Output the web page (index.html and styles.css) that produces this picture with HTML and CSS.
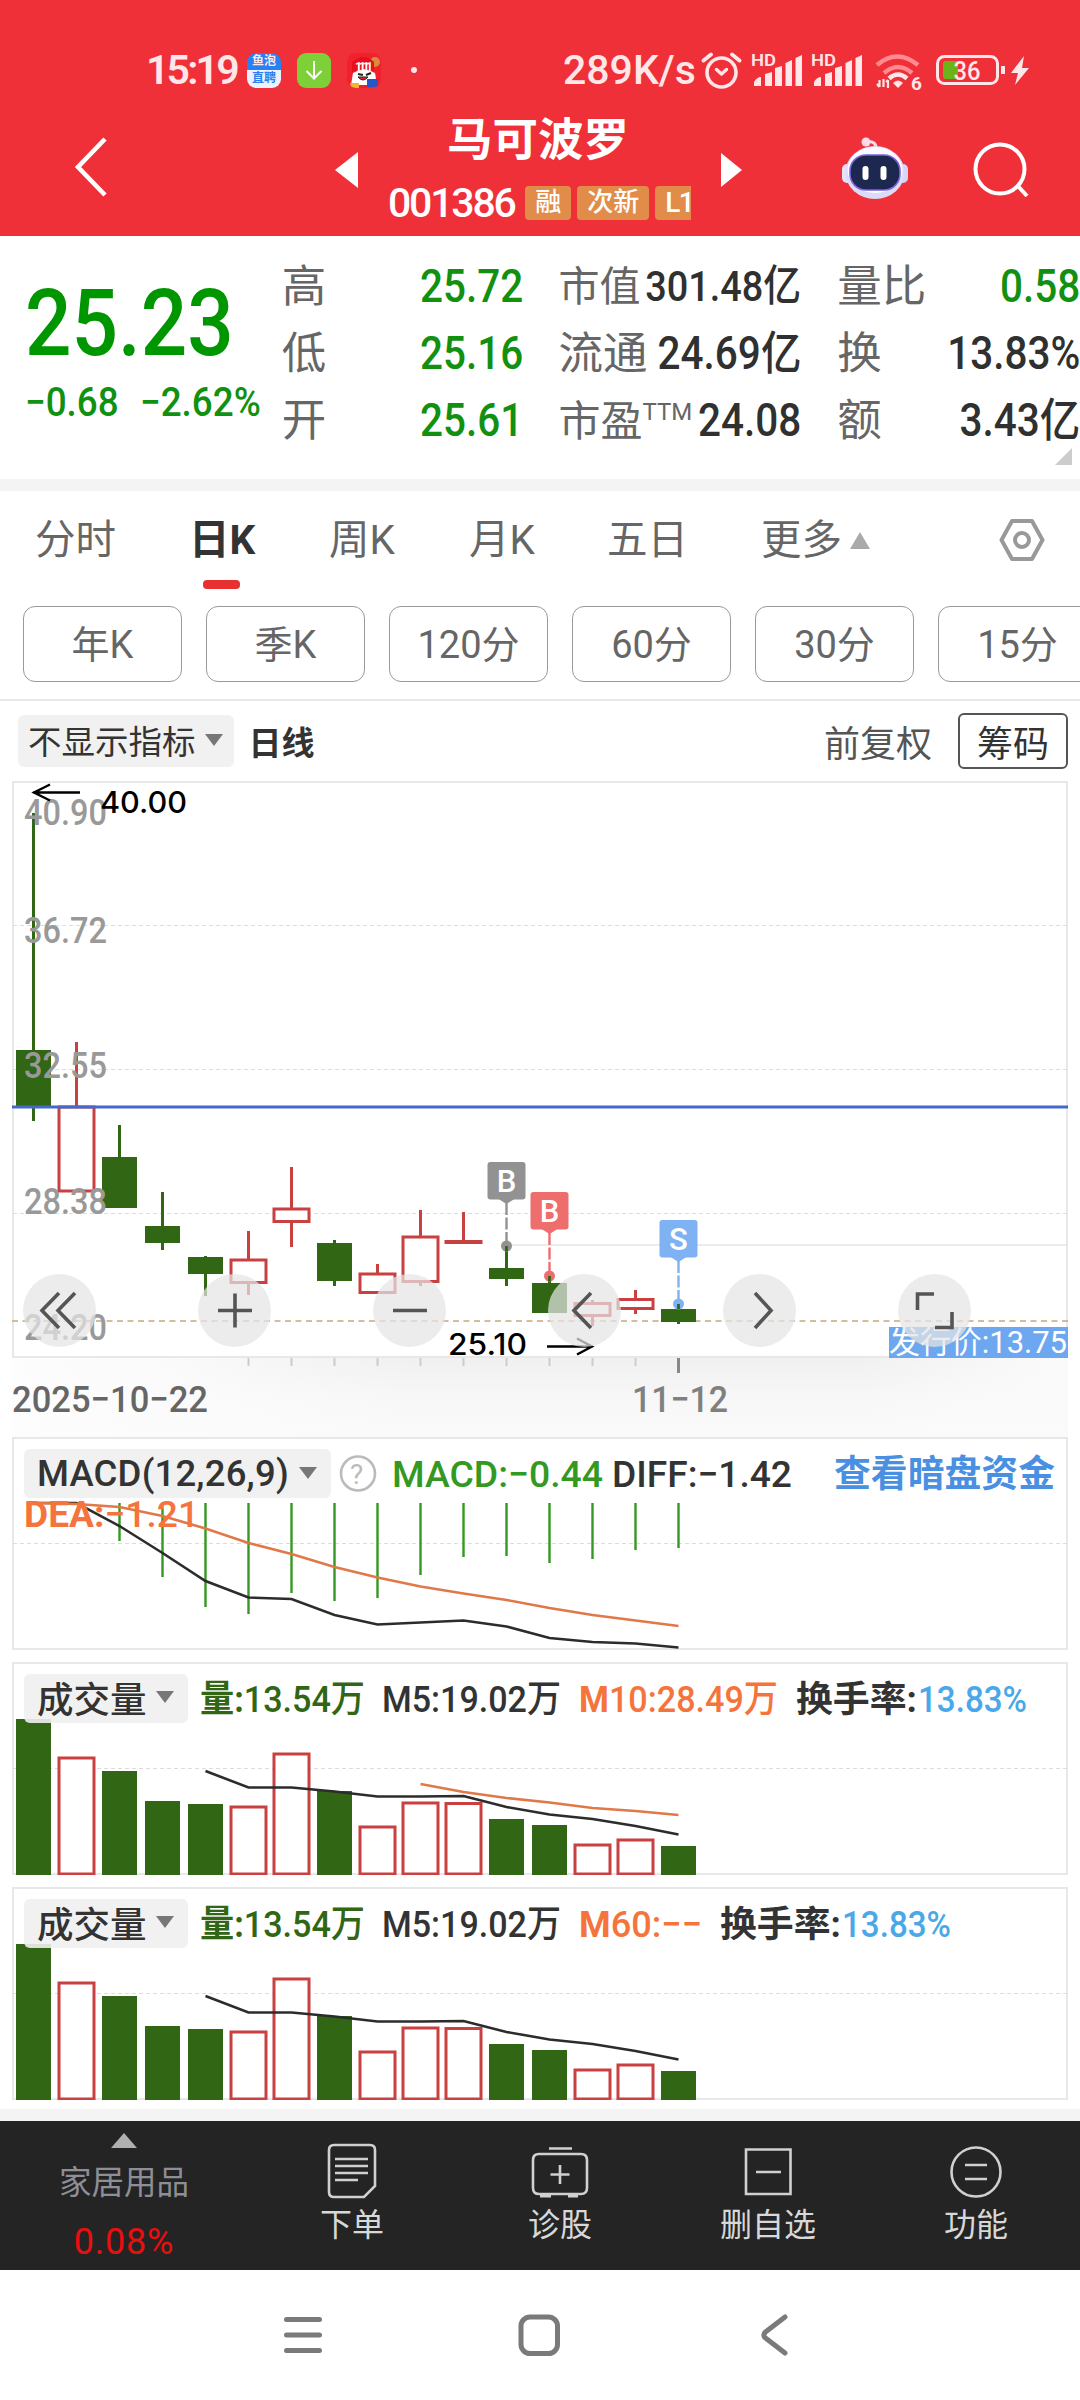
FILE: index.html
```html
<!DOCTYPE html>
<html lang="zh-CN">
<head>
  <meta charset="UTF-8">
  <meta name="viewport" content="width=device-width, initial-scale=1.0">
  <title>马可波罗 001386</title>
  <link rel="stylesheet" href="styles.css">
</head>
<body>
  <header class="Header">
    <div class="StatusBar">
      <span class="StatusBar-Time">15:19</span>
      <span class="AppIcon AppIcon-Fish"><b>鱼泡</b><b>直聘</b></span>
      <span class="AppIcon AppIcon-Down">
        <svg width="34" height="35" viewBox="0 0 34 35"><path d="M17 8v17M9.500 18l7.500 7.500 7.500-7.500" fill="none" stroke="#fff" stroke-width="2"/></svg>
      </span>
      <span class="AppIcon">
        <svg width="34" height="35" viewBox="0 0 34 35">
          <rect width="34" height="35" rx="8" fill="#f0202c"/>
          <circle cx="28" cy="9" r="5" fill="#d98a3c"/>
          <path d="M4 32l2-12q11-7 22 0l2 12z" fill="#fff"/>
          <path d="M5 19V9q12-10 22 0v9q-11-5-22 1z" fill="#e8101c"/>
          <text x="8" y="18" font-size="12" font-weight="700" fill="#fff" textLength="18">11.11</text>
          <path d="M11 21l5 1M19 22l5-2" stroke="#222" stroke-width="2"/>
          <path d="M11 24q5 6 10 0z" fill="#e8202c" stroke="#222"/>
          <rect x="20" y="26" width="11" height="8" fill="#2458c8"/>
          <path d="M3 30h9v5h-8z" fill="#f6b62c"/>
        </svg>
      </span>
      <i class="StatusBar-Dot"></i>
      <span class="StatusBar-Speed">289K/s</span>
      <svg class="StatusBar-Icons" width="330" height="44" viewBox="700 48 330 44" fill="none" stroke="#ffe6e8">
        <circle cx="721.500" cy="72.500" r="14.500" stroke-width="3.600"/>
        <path d="M703.500 60.500l7.500-6M739.500 60.500l-7.500-6" stroke-width="4" stroke-linecap="round"/>
        <path d="M716.500 69.500l5 4.500 5-4.500" stroke-width="3.400" stroke-linecap="round" stroke-linejoin="round"/>
        <g id="signalA" fill="#ffe6e8" stroke="none">
          <text x="751" y="66" font-size="16" font-weight="600" textLength="25" lengthAdjust="spacingAndGlyphs">HD</text>
          <path d="M754 86v-4q3-5 7-5v9zM765 86V74l7-2v14zM775 86V68l7-2v20zM785.500 86V63l6.500-3v26zM795.500 86V58l6.500-3v31z"/>
        </g>
        <use href="#signalA" x="60"/>
        <path d="M877 65q20-17 41 0M884 73q14-12 28 0" stroke="#ff8a8f" stroke-width="4.500"/>
        <path d="M889 78.500q9-8 18 0" stroke-width="4.500"/>
        <path d="M893 83q5-5 10 0l-5 5z" fill="#ffe6e8" stroke="none"/>
        <path d="M879.500 80v7M883.500 79v8M877 84l2.500 3M888 80v8M886 82l2-2" stroke-width="2.200"/>
        <text x="911" y="90" font-size="19" font-weight="700" fill="#ffe6e8" stroke="none">6</text>
        <rect x="937.500" y="56.500" width="60" height="27" rx="7" stroke-width="3"/>
        <path d="M946 61h12v18h-12q-3 0-3-3V64q0-3 3-3z" fill="#6ab41a" stroke="none"/>
        <text x="953.500" y="79.500" font-size="25" font-weight="500" fill="#ffe6e8" stroke="none" textLength="27" lengthAdjust="spacingAndGlyphs">36</text>
        <path d="M1003 66v8" stroke-width="4"/>
        <path d="M1024 56l-13 17h7l-3 12 14-17h-7z" fill="#ffe6e8" stroke="none"/>
      </svg>
    </div>

    <div class="TitleBar">
      <svg class="TitleBar-Back" width="40" height="66" viewBox="0 0 40 66"><path d="M35 5L8 33l27 28" fill="none" stroke="#fff" stroke-width="4.600"/></svg>
      <svg class="TitleBar-Prev" width="23" height="36" viewBox="0 0 23 36"><path d="M23 0v36L0 18z" fill="#fff"/></svg>
      <div class="Stock">
        <div class="Stock-Name">马可波罗</div>
        <div class="Stock-Info">
          <span class="Stock-Code">001386</span>
          <span class="Tag">融</span>
          <span class="Tag">次新</span>
          <span class="Tag Tag-Cut">L1</span>
        </div>
      </div>
      <svg class="TitleBar-Next" width="21" height="34" viewBox="0 0 21 34"><path d="M0 0v34l21-17z" fill="#fff"/></svg>
      <svg class="TitleBar-Robot" width="68" height="64" viewBox="0 0 68 64">
        <circle cx="25" cy="5" r="4.500" fill="#ffd9e6"/>
        <path d="M25 4.500q11-1 10 8" fill="none" stroke="#f7dcea" stroke-width="3"/>
        <rect x="1" y="27" width="10" height="19" rx="5" fill="#e4e2fb"/>
        <rect x="57" y="27" width="10" height="19" rx="5" fill="#d6d4fa"/>
        <ellipse cx="34" cy="35.500" rx="29.500" ry="26.500" fill="#dcdcf8"/>
        <ellipse cx="34" cy="33" rx="27.500" ry="23" fill="#fbfbff"/>
        <rect x="9" y="18" width="50" height="35" rx="16" fill="#1c2850" stroke="#7a62e0" stroke-width="1.600"/>
        <path d="M24.500 32v8M42.500 32v8" stroke="#fff" stroke-width="6" stroke-linecap="round"/>
      </svg>
      <svg class="TitleBar-Search" width="60" height="60" viewBox="0 0 60 60" fill="none" stroke="#fff" stroke-width="4"><circle cx="29" cy="28" r="24.500"/><path d="M46 44l10 11"/></svg>
    </div>
  </header>

  <section class="Quote">
    <div class="Quote-Main">
      <div class="Quote-Price"><span class="Num">25.23</span></div>
      <div class="Quote-Change"><span class="Num">−0.68</span><span class="Num">−2.62%</span></div>
    </div>
    <div class="Quote-Col Quote-Col1">
      <div><span>高</span><b class="Num Green">25.72</b></div>
      <div><span>低</span><b class="Num Green">25.16</b></div>
      <div><span>开</span><b class="Num Green">25.61</b></div>
    </div>
    <div class="Quote-Col Quote-Col2">
      <div><span class="Small">市值</span><b class="Num Small">301.48亿</b></div>
      <div><span>流通</span><b class="Num">24.69亿</b></div>
      <div><span class="Mid">市盈<sup>TTM</sup></span><b class="Num">24.08</b></div>
    </div>
    <div class="Quote-Col Quote-Col3">
      <div><span>量比</span><b class="Num Green">0.58</b></div>
      <div><span>换</span><b class="Num">13.83%</b></div>
      <div><span>额</span><b class="Num">3.43亿</b></div>
    </div>
    <i class="Quote-More"></i>
  </section>

  <nav class="Tabs">
    <span>分时</span>
    <span class="Tabs-Active">日K</span>
    <span>周K</span>
    <span>月K</span>
    <span>五日</span>
    <span>更多<i class="Up"></i></span>
    <svg width="46" height="44" viewBox="0 0 46 44" fill="none" stroke="#999" stroke-width="4" stroke-linejoin="round"><path d="M13 3h20l10.500 19L33 41H13L2.500 22z"/><circle cx="23" cy="22" r="7"/></svg>
  </nav>
  <div class="Periods">
    <button>年K</button><button>季K</button><button>120分</button><button>60分</button><button>30分</button><button>15分</button>
  </div>

  <div class="Toolbar">
    <span class="Select">不显示指标<i class="Down"></i></span>
    <b>日线</b>
    <span class="Toolbar-Adjust">前复权</span>
    <button class="Toolbar-Chips">筹码</button>
  </div>

  <section class="Chart Chart-Main">
    <svg width="1080" height="656" viewBox="0 781 1080 656">
      <defs>
        <linearGradient id="axisDown" x1="0" y1="0" x2="0" y2="1">
          <stop offset="0" stop-color="#f0f0f0"/><stop offset=".5" stop-color="#f7f7f7"/><stop offset="1" stop-color="#fafafa"/>
        </linearGradient>
        <linearGradient id="axisFade" x1="0" y1="0" x2="1" y2="0">
          <stop offset="0" stop-color="#fdfdfd"/><stop offset=".15" stop-color="#fcfcfc" stop-opacity=".8"/><stop offset=".38" stop-color="#fcfcfc" stop-opacity="0"/><stop offset=".8" stop-color="#fcfcfc" stop-opacity="0"/><stop offset="1" stop-color="#fafafa"/>
        </linearGradient>
      </defs>
      <rect x="12" y="1357" width="1056" height="80" fill="url(#axisDown)"/>
      <rect x="12" y="1357" width="1056" height="80" fill="url(#axisFade)"/>
      <rect class="Frame" x="13" y="782" width="1054" height="575"/>
      <path class="Grid" d="M13 925.500h1054M13 1069.500h1054M13 1213.500h1054"/>
      <path d="M507 1245h560" stroke="#e6e6e6" stroke-width="1.500"/>
      <path d="M12 1321h1056" stroke="#c8a878" stroke-width="1.600" stroke-dasharray="6 4.500"/>
      <g id="candles"></g>
      <path d="M12 1107h1056" stroke="#4468cc" stroke-width="2.800"/>
      <g class="Price">
        <text x="24" y="825" textLength="83">40.90</text>
        <text x="24" y="943" textLength="83">36.72</text>
        <text x="24" y="1078" textLength="83">32.55</text>
        <text x="24" y="1214" textLength="83">28.38</text>
        <text x="24" y="1340" textLength="83">24.20</text>
      </g>
      <g class="Extreme">
        <path d="M33 792.500h47M50 784.500l-16 8 16 8M547 1346.500h45M577 1338.500l15 8-15 8"/>
        <text x="100" y="813" textLength="87">40.00</text>
        <text x="448" y="1355" textLength="79">25.10</text>
      </g>
      <g id="markers"></g>
      <rect x="889" y="1327" width="179" height="31" fill="#6da7f0"/>
      <text x="889" y="1353" font-size="31" fill="#fff" textLength="178" lengthAdjust="spacingAndGlyphs">发行价:13.75</text>
      <g id="ticks"></g>
      <text x="12" y="1412" class="Date" fill="#666" textLength="196">2025−10−22</text>
      <text x="632" y="1412" class="Date" fill="#808080" textLength="96">11−12</text>
    </svg>
    <div class="Controls">
      <button><svg viewBox="0 0 73 73"><path d="M36 19L19 36.500 36 54M52 19L35 36.500 52 54"/></svg></button>
      <button><svg viewBox="0 0 73 73"><path d="M20 36.500h34M37 19.500v34"/></svg></button>
      <button><svg viewBox="0 0 73 73"><path d="M20 36.500h34"/></svg></button>
      <button><svg viewBox="0 0 73 73"><path d="M43 19L26 36.500 43 54"/></svg></button>
      <button><svg viewBox="0 0 73 73"><path d="M32 19l16 17.500L32 54"/></svg></button>
      <button><svg viewBox="0 0 73 73"><path d="M19.500 36V20H36M54 38v15.500H37"/></svg></button>
    </div>
  </section>

  <section class="Chart Chart-Macd">
    <svg width="1080" height="213" viewBox="0 1437 1080 213">
      <rect class="Frame" x="13" y="1438" width="1054" height="211"/>
      <path class="Grid" d="M13 1543.500h1054"/>
      <g id="macd"></g>
      <circle cx="358" cy="1473.500" r="17" fill="none" stroke="#bbb" stroke-width="2.600"/>
      <text x="350" y="1483.500" font-size="28" fill="#bbb">?</text>
      <text x="392" y="1487" class="Legend" fill="#339922" textLength="211"><tspan font-weight="500">MACD:</tspan>−0.44</text>
      <text x="612" y="1487" class="Legend" fill="#333" textLength="180"><tspan font-weight="500">DIFF:</tspan>−1.42</text>
      <text x="24" y="1527" class="Legend" fill="#f4743c" textLength="175"><tspan font-weight="700">DEA:</tspan>−1.21</text>
      <text x="834" y="1487" font-size="37" font-weight="700" fill="#4a90e2" textLength="221">查看暗盘资金</text>
    </svg>
    <span class="Select Select-Panel Select-Macd"><span>MACD</span>(12,26,9)<i class="Down"></i></span>
  </section>

  <section class="Chart">
    <svg width="1080" height="213" viewBox="0 1662 1080 213">
      <rect class="Frame" x="13" y="1663" width="1054" height="211"/>
      <path class="Grid" d="M13 1768.500h1054"/>
      <g class="Volume"></g>
      <path id="ma10" class="Line" stroke="#e07848"/>
      <text x="200" y="1712" class="Legend" fill="#306614" textLength="165"><tspan font-weight="700">量:</tspan>13.54万</text>
      <text x="382" y="1712" class="Legend" fill="#333" textLength="179">M5:19.02万</text>
      <text x="579" y="1712" class="Legend" fill="#f4743c" textLength="199"><tspan font-weight="700">M</tspan>10:28.49万</text>
      <text x="796" y="1712" class="Legend Legend-Cn" fill="#333" textLength="121">换手率:</text>
      <text x="918" y="1712" class="Legend" fill="#4aa8e8" textLength="109">13.83%</text>
    </svg>
    <span class="Select Select-Panel">成交量<i class="Down"></i></span>
  </section>

  <section class="Chart">
    <svg width="1080" height="213" viewBox="0 1662 1080 213">
      <rect class="Frame" x="13" y="1663" width="1054" height="211"/>
      <path class="Grid" d="M13 1768.500h1054"/>
      <g class="Volume"></g>
      <text x="200" y="1712" class="Legend" fill="#306614" textLength="165"><tspan font-weight="700">量:</tspan>13.54万</text>
      <text x="382" y="1712" class="Legend" fill="#333" textLength="179">M5:19.02万</text>
      <text x="579" y="1712" class="Legend" fill="#f4743c" textLength="123"><tspan font-weight="700">M</tspan>60:−−</text>
      <text x="720" y="1712" class="Legend Legend-Cn" fill="#333" textLength="121">换手率:</text>
      <text x="842" y="1712" class="Legend" fill="#4aa8e8" textLength="109">13.83%</text>
    </svg>
    <span class="Select Select-Panel">成交量<i class="Down"></i></span>
  </section>

  <footer class="BottomBar">
    <div class="Sector">
      <i class="Up"></i>
      <span>家居用品</span>
      <b>0.08%</b>
    </div>
    <div class="BottomBar-Item">
      <svg width="60" height="56" viewBox="0 0 60 56"><path d="M12 2h36q5 0 5 5v36L42 54H12q-5 0-5-5V7q0-5 5-5zM13 16h33M13 23h33M13 30h33M13 37h23"/></svg>
      <span>下单</span>
    </div>
    <div class="BottomBar-Item">
      <svg width="60" height="56" viewBox="0 0 60 56"><path d="M19 5.500h23M9 11h42q6 0 6 6v28q0 6-6 6H9q-6 0-6-6V17q0-6 6-6zM30 22v19M20.500 31.500h19"/><path d="M10 52.500h11M38 52.500h10" stroke-width="4"/></svg>
      <span>诊股</span>
    </div>
    <div class="BottomBar-Item">
      <svg width="60" height="56" viewBox="0 0 60 56"><path d="M8 6.500h44.500v44.500H8zM18 29h25"/></svg>
      <span>删自选</span>
    </div>
    <div class="BottomBar-Item">
      <svg width="60" height="56" viewBox="0 0 60 56"><circle cx="30" cy="29" r="24.500"/><path d="M19 22h22M19 36h22"/></svg>
      <span>功能</span>
    </div>
  </footer>

  <div class="SystemNav">
    <svg width="40" height="44" viewBox="0 0 40 44"><path d="M3.500 6.500h33M3.500 22h33M3.500 37.500h33"/></svg>
    <svg width="44" height="44" viewBox="0 0 44 44"><rect x="4" y="4" width="36.500" height="36.500" rx="9"/></svg>
    <svg width="40" height="44" viewBox="0 0 40 44"><path d="M30 4L10.500 19q-3.500 3 0 6L30 40"/></svg>
  </div>

  <script src="script.js"></script>
</body>
</html>
```
FILE: styles.css
```css
* {
  margin: 0;
  padding: 0;
  box-sizing: border-box;
}

body {
  width: 1080px;
  height: 2400px;
  overflow: hidden;
  background-color: #fff;
  font-family: Roboto, 'Noto Sans CJK SC', sans-serif;
}

svg {
  display: block;
}

button {
  border: none;
  background: none;
  font-family: inherit;
}

/* 顶部 */
.Header {
  height: 236px;
  background-color: #f03038;
  color: #fff;
}

.StatusBar {
  height: 92px;
  padding: 48px 0 0 146px;
  display: flex;
  align-items: center;
  color: #ffe6e8;
  white-space: nowrap;
}

.StatusBar-Time {
  width: 101px;
  font-size: 41px;
  font-weight: 600;
  letter-spacing: -2.800px;
}

.AppIcon {
  width: 34px;
  height: 35px;
  margin-right: 16px;
  border-radius: 9px;
  overflow: hidden;
}

.AppIcon-Fish {
  background: linear-gradient(#2a80f0 50%, #eaf2ff 50%);
  font-size: 12px;
  line-height: 17px;
  text-align: center;
}

.AppIcon-Fish b {
  display: block;
}

.AppIcon-Fish b + b {
  color: #2a80f0;
}

.AppIcon-Down {
  background-color: #7ed038;
}

.StatusBar-Dot {
  width: 6px;
  height: 6px;
  margin-left: 14px;
  border-radius: 50%;
  background-color: #ffe6e8;
}

.StatusBar-Speed {
  width: 137px;
  margin-left: 146px;
  font-size: 41px;
  font-weight: 500;
}

.StatusBar-Icons {
  flex-shrink: 0;
}

.TitleBar {
  height: 144px;
  display: flex;
  align-items: flex-start;
}

.TitleBar-Back {
  margin: 42px 0 0 70px;
}

.TitleBar-Prev {
  margin: 60px 0 0 225px;
}

.Stock {
  width: 302px;
  margin-left: 31px;
}

.TitleBar-Next {
  margin: 61px 0 0 30px;
}

.TitleBar-Robot {
  margin: 45px 0 0 99px;
}

.TitleBar-Search {
  margin: 49px 0 0 62px;
}

.Stock-Name {
  margin-top: 19px;
  height: 60px;
  line-height: 60px;
  padding-left: 58px;
  font-size: 45.500px;
  font-weight: 700;
}

.Stock-Info {
  margin-top: 15px;
  height: 34px;
  display: flex;
  align-items: center;
}

.Stock-Code {
  width: 137px;
  margin-left: -1px;
  margin-right: 1px;
  font-size: 41px;
  font-weight: 500;
  letter-spacing: -2.200px;
}

.Tag {
  height: 34px;
  line-height: 33px;
  margin-right: 6px;
  padding: 0 10px;
  border-radius: 4px;
  background-color: #e28c4a;
  font-size: 26px;
  font-weight: 500;
  white-space: nowrap;
}

.Tag-Cut {
  width: 36px;
  margin-right: 0;
  padding-right: 0;
  border-radius: 4px 0 0 4px;
  font-size: 28px;
  letter-spacing: -1.500px;
  overflow: hidden;
}

/* 行情 */
.Num {
  display: inline-block;
  font-weight: 500;
  transform: scaleX(.88);
  transform-origin: right;
  white-space: nowrap;
}

.Quote {
  position: relative;
  height: 255px;
  display: flex;
  border-bottom: 12px solid #f4f4f4;
}

.Quote-Main {
  width: 282px;
  padding: 33px 0 0 25px;
  color: #009600;
}

.Quote-Main .Num {
  transform-origin: left;
}

.Quote-Price {
  height: 110px;
  line-height: 110px;
  font-size: 93px;
}

.Quote-Change {
  display: flex;
  height: 50px;
  line-height: 47px;
  font-size: 40px;
  color: #129010;
}

.Quote-Change .Num {
  transform: scaleX(.92);
}

.Quote-Change .Num:first-child {
  width: 115px;
}

.Quote-Col {
  padding-top: 17px;
  font-size: 44.500px;
}

.Quote-Col div {
  height: 67px;
  display: flex;
  justify-content: space-between;
  align-items: baseline;
  line-height: 67px;
  color: #303030;
}

.Quote-Col span {
  color: #666;
  white-space: nowrap;
}

.Quote-Col .Num {
  font-size: 46px;
}

.Quote-Col .Green {
  color: #129010;
}

.Quote-Col .Small {
  font-size: 41px;
}

.Quote-Col .Num.Small {
  font-size: 43px;
}

.Quote-Col .Mid {
  font-size: 42px;
}

.Quote-Col sup {
  font-size: 24px;
  line-height: 0;
  vertical-align: 16px;
}

.Quote-Col1 {
  width: 242px;
}

.Quote-Col2 {
  width: 243px;
  margin-left: 35px;
}

/* 缩放前的宽度会超出一行 */
.Quote-Col2 .Num {
  margin-left: -40px;
}

.Quote-Col3 {
  width: 243px;
  margin-left: 36px;
}

.Quote-More {
  position: absolute;
  right: 8px;
  bottom: 14px;
  border-left: 17px solid transparent;
  border-bottom: 17px solid #ccc;
}

/* 周期 */
.Tabs {
  height: 108px;
  display: flex;
  padding-left: 35px;
  line-height: 98px;
  font-size: 40.500px;
  color: #666;
}

.Tabs span {
  width: 140px;
  white-space: nowrap;
}

.Tabs span:first-child {
  width: 154px;
}

.Tabs span:nth-child(4) {
  width: 138px;
}

.Tabs span:nth-child(5) {
  width: 154px;
}

.Tabs span:nth-child(6) {
  width: 238px;
}

.Tabs svg {
  margin-top: 27px;
}

.Tabs .Tabs-Active {
  position: relative;
  font-weight: 700;
  color: #333;
}

.Tabs-Active::after {
  content: '';
  position: absolute;
  left: 14px;
  bottom: 10px;
  width: 37px;
  height: 9px;
  border-radius: 4px;
  background-color: #e83030;
}

.Up {
  display: inline-block;
  border: 10px solid transparent;
  border-top: none;
  border-bottom: 17px solid #aaa;
}

.Tabs .Up {
  margin-left: 8px;
  vertical-align: 5px;
}

.Periods {
  height: 102px;
  padding: 7px 0 0 23px;
  display: flex;
  gap: 24px;
  overflow: hidden;
  border-bottom: 2px solid #e8e8e8;
}

.Periods button {
  flex: 0 0 159px;
  height: 76px;
  padding-bottom: 5px;
  border: 1.500px solid #999;
  border-radius: 12px;
  font-size: 38px;
  color: #666;
}

.Toolbar {
  height: 80px;
  padding: 0 12px 0 18px;
  display: flex;
  align-items: center;
  font-size: 33px;
  color: #333;
}

.Select {
  height: 52px;
  padding: 0 11px 3px 10px;
  display: flex;
  align-items: center;
  gap: 9px;
  border-radius: 6px;
  background-color: rgba(240, 240, 240, .95);
  font-size: 33.500px;
  color: #333;
  white-space: nowrap;
}

.Toolbar b {
  margin-left: 15px;
}

.Down {
  border: 9px solid transparent;
  border-bottom: none;
  border-top: 12px solid #777;
}

.Toolbar-Adjust {
  margin-left: auto;
  margin-right: 26px;
  font-size: 36px;
  color: #555;
}

.Toolbar-Chips {
  width: 110px;
  height: 56px;
  padding-bottom: 5px;
  border: 2px solid #555;
  border-radius: 6px;
  font-size: 36px;
  color: #333;
}

/* 图表 */
.Chart {
  position: relative;
  height: 213px;
  margin-bottom: 12px;
}

.Chart-Main {
  height: 656px;
  margin-bottom: 0;
}

.Chart text {
  white-space: pre;
}

.Frame {
  fill: none;
  stroke: #e8e8e8;
  stroke-width: 2;
}

.Grid {
  stroke: #ddd;
  stroke-width: 1;
  stroke-dasharray: 4 3;
}

.Line {
  fill: none;
  stroke-width: 2.600;
}

.Price {
  font-size: 36px;
  font-weight: 500;
  fill: #999;
}

.Extreme {
  font-family: Inter, sans-serif;
  font-size: 30px;
  font-weight: 500;
}

.Extreme path {
  fill: none;
  stroke: #000;
  stroke-width: 2.400;
}

.Date {
  font-size: 37px;
  font-weight: 500;
}

.Legend {
  font-size: 37px;
  font-weight: 500;
}

.Legend-Cn {
  font-size: 36px;
  font-weight: 700;
}

.Controls {
  position: absolute;
  top: 493px;
  left: 23px;
  display: flex;
  gap: 102px;
}

.Controls button {
  width: 73px;
  height: 73px;
  border-radius: 50%;
  background-color: rgba(229, 229, 229, .72);
}

.Controls path {
  fill: none;
  stroke: #555;
  stroke-width: 3.600;
}

.Select-Panel {
  position: absolute;
  top: 12px;
  left: 24px;
  height: 49px;
  padding: 0 14px 3px 13px;
  font-size: 36.500px;
  font-weight: 500;
  background-color: rgba(240, 240, 240, .9);
}

.Select-Macd {
  width: 307px;
  gap: 0;
  padding-bottom: 1px;
  letter-spacing: .200px;
}

.Select-Macd .Down {
  margin-left: 10px;
}

/* 底部 */
.BottomBar {
  height: 161px;
  margin-top: -3px;
  border-top: 12px solid #f4f4f4;
  display: flex;
  background-color: #242424;
  color: #d8d8d8;
}

.Sector {
  width: 248px;
  padding-top: 12px;
  display: flex;
  flex-direction: column;
  align-items: center;
  font-size: 32.500px;
  color: #8e8e96;
}

.Sector .Up {
  border-width: 0 13px 15px;
  border-bottom-color: #b0b0b0;
}

.Sector span {
  margin-top: 10px;
  line-height: 50px;
}

.Sector b {
  line-height: 68px;
  font-size: 36px;
  font-weight: 400;
  letter-spacing: .800px;
  color: #e80f0f;
}

.BottomBar-Item {
  width: 208px;
  padding-top: 22px;
  display: flex;
  flex-direction: column;
  align-items: center;
  font-size: 32px;
}

.BottomBar-Item span {
  line-height: 52px;
}

.BottomBar-Item svg {
  fill: none;
  stroke: #d0d0d0;
  stroke-width: 2.600;
}

.SystemNav {
  height: 130px;
  padding: 43px 285px 0 283px;
  display: flex;
  justify-content: space-between;
}

.SystemNav svg {
  fill: none;
  stroke: #7a7a7a;
  stroke-width: 5;
  stroke-linecap: round;
}
```
FILE: script.js
```js
const GREEN = '#306614';
const RED = '#c84040';
const STEP = 43;
const WIDTH = 35;

const getX = (i) => 33.5 + STEP * i;

// [颜色, 最高, 实体上, 实体下, 最低]
const candles = [
  ['g', 813, 1050, 1107, 1121],
  ['r', 1042, 1107, 1191, 1191],
  ['g', 1125, 1157, 1208, 1208],
  ['g', 1192, 1226, 1243, 1250],
  ['g', 1256, 1257, 1274, 1296],
  ['r', 1231, 1260, 1282.5, 1295],
  ['r', 1167, 1209, 1221.5, 1247],
  ['g', 1240, 1243, 1281, 1286],
  ['r', 1264, 1274, 1292.5, 1292.5],
  ['r', 1210, 1237, 1281.5, 1286],
  ['r', 1212, 1241.5, 1242.5, 1242.5],
  ['g', 1246, 1268, 1279, 1286],
  ['g', 1277, 1283, 1313, 1313],
  ['r', 1300, 1303.5, 1315.5, 1326],
  ['r', 1290, 1299.5, 1308.5, 1314],
  ['g', 1305, 1309, 1322, 1324]
];

const volumes = [1719, 1758, 1771, 1801, 1804, 1807, 1754, 1791, 1827, 1803, 1803.5, 1819, 1825, 1845, 1840, 1846];
const ma5 = [1771, 1787.5, 1787.5, 1791.5, 1796.5, 1796.5, 1796, 1807, 1814.5, 1819, 1826, 1834.5];
const ma10 = [1784, 1792, 1798, 1802.5, 1808, 1811, 1815];

const macd = [1541, 1577, 1607, 1614, 1593, 1601, 1598, 1575, 1557, 1556, 1563, 1559, 1550, 1548];
const diff = [1503, 1503, 1526, 1553, 1581, 1597.5, 1599, 1615, 1624.5, 1622.5, 1620.5, 1626.5, 1638, 1642, 1643.5, 1647.5];
const dea = [1503, 1504, 1507, 1516, 1528.5, 1543, 1554, 1567, 1577.5, 1586.5, 1593.5, 1600, 1608, 1615, 1620.5, 1626];

const getPath = (list, start) => list.map((y, i) => `${i ? 'L' : 'M'}${getX(i + start)} ${y}`).join('');

const getBar = (color, x, top, bottom) => {
  if (color === 'g') {
    return `<rect x="${x - WIDTH / 2}" y="${top}" width="${WIDTH}" height="${bottom - top}" fill="${GREEN}"/>`;
  }
  return `<rect x="${x - WIDTH / 2}" y="${top}" width="${WIDTH}" height="${bottom - top}" fill="#fff" stroke="${RED}" stroke-width="3"/>`;
};

document.getElementById('candles').innerHTML = candles.map(([color, high, top, bottom, low], i) => {
  const x = getX(i);
  return `<path d="M${x} ${high}V${low}" stroke="${color === 'g' ? GREEN : RED}" stroke-width="3"/>` + getBar(color, x, top, bottom);
}).join('');

// 买卖点
document.getElementById('markers').innerHTML = [
  [11, 'B', '#929292', 1162, 1246],
  [12, 'B', '#ee6e6e', 1192, 1276],
  [15, 'S', '#7eb2f2', 1220, 1304]
].map(([i, text, color, top, dot]) => {
  const x = getX(i);
  return `<rect x="${x - 19}" y="${top}" width="38" height="37.5" rx="3" fill="${color}"/>
    <path d="M${x - 8} ${top + 37}h16l-8 5z" fill="${color}"/>
    <path d="M${x} ${top + 41}V${dot}" stroke="${color}" stroke-width="2.4" stroke-dasharray="12 2.5"/>
    <circle cx="${x}" cy="${dot}" r="5.5" fill="${color}"/>
    <path d="M${x} ${dot}v5" stroke="${GREEN}" stroke-width="2.8"/>
    <text x="${x}" y="${top + 30}" font-size="31" font-weight="500" fill="#fff" text-anchor="middle">${text}</text>`;
}).join('');

let ticks = '';
for (let i = 5; i < 15; i++) {
  ticks += `<path d="M${getX(i)} 1358v8" stroke="#ccc" stroke-width="2"/>`;
}
ticks += `<path d="M${getX(15)} 1358v15" stroke="#888" stroke-width="3"/>`;
document.getElementById('ticks').innerHTML = ticks;

document.getElementById('macd').innerHTML =
  macd.map((y, i) => `<path d="M${getX(i + 2)} 1503V${y}" stroke="#339922" stroke-width="2.4"/>`).join('') +
  `<path class="Line" stroke="#2c2c2c" d="${getPath(diff, 0)}"/>` +
  `<path class="Line" stroke="#e07848" d="${getPath(dea, 0)}"/>`;

document.querySelectorAll('.Volume').forEach((el) => {
  el.innerHTML = volumes.map((y, i) => getBar(candles[i][0], getX(i), y, candles[i][0] === 'g' ? 1875 : 1874)).join('') +
    `<path class="Line" stroke="#2c2c2c" d="${getPath(ma5, 4)}"/>`;
});

document.getElementById('ma10').setAttribute('d', getPath(ma10, 9));

// 文字按固定宽度压缩
document.querySelectorAll('.Chart text[textLength]').forEach((el) => {
  el.setAttribute('lengthAdjust', 'spacingAndGlyphs');
});
```
